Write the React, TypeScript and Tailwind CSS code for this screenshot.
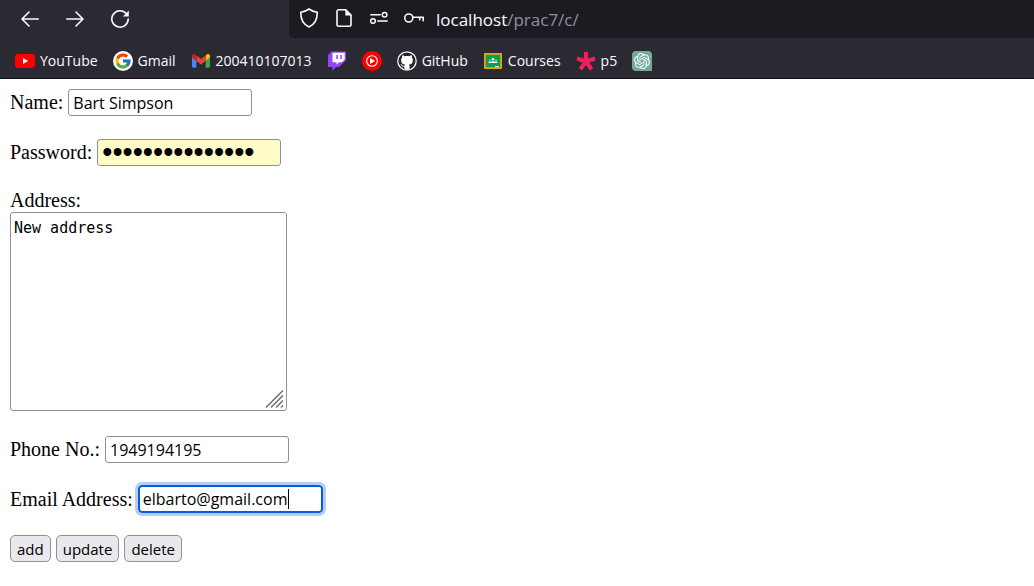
import type { ReactNode } from "react";
import { FcGoogle } from "react-icons/fc";
import { SiOpenai } from "react-icons/si";

function BackIcon() {
  return (
    <svg viewBox="0 0 20 20" className="size-5" fill="none" stroke="#fbfbfe" strokeWidth="1.6" strokeLinecap="round" strokeLinejoin="round">
      <path d="M18.2 10H2M9 3 2 10l7 7" />
    </svg>
  );
}

function ForwardIcon() {
  return (
    <svg viewBox="0 0 20 20" className="size-5" fill="none" stroke="#fbfbfe" strokeWidth="1.6" strokeLinecap="round" strokeLinejoin="round">
      <path d="M1.8 10H18M11 3l7 7-7 7" />
    </svg>
  );
}

function ReloadIcon() {
  return (
    <svg viewBox="0 0 20 20" className="size-5" fill="none" stroke="#fbfbfe" strokeWidth="1.6" strokeLinecap="round">
      <path d="M16.2 4.6A8.2 8.2 0 1 0 18.2 10" />
      <path d="M18.8 1.6v6h-6z" fill="#fbfbfe" stroke="none" />
    </svg>
  );
}

function ShieldIcon() {
  return (
    <svg viewBox="0 0 20 20" className="size-5" fill="none" stroke="#fbfbfe" strokeWidth="1.6" strokeLinejoin="round">
      <path d="M10 1c2.500 1.800 5 2.700 8.300 3.300C18.300 11.500 16 16.500 10 19 4 16.500 1.700 11.500 1.700 4.300 5 3.700 7.500 2.800 10 1z" />
    </svg>
  );
}

function PageIcon() {
  return (
    <svg viewBox="0 0 20 20" className="size-5" fill="none" stroke="#fbfbfe" strokeWidth="1.6" strokeLinejoin="round">
      <path d="M4.500 1.800h7.200L17 7.100v9.600a1.500 1.500 0 0 1-1.500 1.500h-11A1.500 1.500 0 0 1 3 16.700V3.300a1.500 1.500 0 0 1 1.500-1.500z" />
      <path d="M11.400 1.500v5.900h5.900z" fill="#fbfbfe" stroke="none" />
    </svg>
  );
}

function PermissionsIcon() {
  return (
    <svg viewBox="0 0 20 20" className="size-5" fill="none" stroke="#fbfbfe" strokeWidth="1.500" strokeLinecap="round">
      <circle cx="15.600" cy="6.800" r="2.300" />
      <path d="M1.800 6.800h9.400M8.800 13h9.400" />
      <circle cx="4" cy="13" r="2.300" />
    </svg>
  );
}

function KeyIcon() {
  return (
    <svg viewBox="0 0 20 20" className="size-5" fill="none" stroke="#fbfbfe" strokeWidth="1.600" strokeLinecap="round" strokeLinejoin="round">
      <circle cx="4.800" cy="10" r="4" />
      <path d="M9 9.300h10.200v3.400M15.700 9.300v2.400" />
    </svg>
  );
}

function YouTubeIcon() {
  return (
    <svg viewBox="0 0 20 20" className="size-5">
      <rect y="3" width="20" height="14" rx="3.200" fill="#f00" />
      <path d="M8 7v6l5.200-3z" fill="#fff" />
    </svg>
  );
}

function GoogleIcon() {
  return (
    <span className="flex size-5 items-center justify-center rounded-full bg-white">
      <FcGoogle className="size-[18px]" />
    </span>
  );
}

function GmailIcon() {
  return (
    <svg viewBox="0 0 20 20" className="size-5">
      <path d="M1 5v10.300c0 .8.600 1.400 1.400 1.400h3V9.300z" fill="#4285f4" />
      <path d="M19 5v10.300c0 .8-.600 1.400-1.400 1.400h-3V9.300z" fill="#34a853" />
      <path d="M14.600 4.800v5l4.400-3.300V5c0-1.800-2-2.500-3.200-1.500z" fill="#fbbc04" />
      <path d="M5.400 10V4.600L10 8.100l4.600-3.500V10L10 13.400z" fill="#ea4335" />
      <path d="M1 5v1.500L5.400 9.800V4.600L4.200 3.500C2.900 2.500 1 3.300 1 5z" fill="#c5221f" />
    </svg>
  );
}

function TwitchIcon() {
  return (
    <svg viewBox="0 0 20 20" className="size-5">
      <path d="M4.500.500 1 4v12h4.300v3.700L9 16h3l7-7V.500z" fill="#9146ff" />
      <path d="M5.500 1.800h12.200v6.700L15 11.200h-3l-2.500 2.500v-2.500h-4z" fill="#fff" />
      <path d="M9.300 4h1.500v4H9.300zM13.300 4h1.500v4h-1.500z" fill="#9146ff" />
    </svg>
  );
}

function YouTubeMusicIcon() {
  return (
    <svg viewBox="0 0 20 20" className="size-5">
      <circle cx="10" cy="10" r="10" fill="#f00" />
      <circle cx="10" cy="10" r="5.300" fill="none" stroke="#fff" strokeWidth="1.100" />
      <path d="M8 6.900v6.200l5.100-3.100z" fill="#fff" />
    </svg>
  );
}

function GitHubIcon() {
  return (
    <svg viewBox="0 0 20 20" className="size-5">
      <circle cx="10" cy="10" r="9.200" fill="#24292e" stroke="#f5f5f5" strokeWidth="1.300" />
      <path
        d="M7.400 18.600v-2.900c-2 .4-2.600-.8-3-1.500-.2-.4-.6-.6-1-.9 1-.3 1.600.4 2 1 .5.700 1.200.8 2 .5.100-.5.400-.9.700-1.200-2.500-.3-4-1.600-4-4.400 0-1 .3-1.900 1-2.500-.2-.8-.1-1.700.2-2.500.9 0 1.700.4 2.400 1 1.500-.4 3-.4 4.600 0 .7-.6 1.500-1 2.400-1 .3.800.4 1.700.2 2.500.7.600 1 1.500 1 2.500 0 2.800-1.500 4.100-4 4.400.5.500.7 1.100.7 2v3z"
        fill="#fff"
      />
    </svg>
  );
}

function ClassroomIcon() {
  return (
    <svg viewBox="0 0 20 20" className="size-5">
      <rect x="1" y="2" width="18" height="16" rx="1" fill="#e5a80c" />
      <rect x="2.800" y="3.800" width="14.400" height="12.400" fill="#0f9d58" />
      <circle cx="10" cy="8.200" r="1.300" fill="#fff" />
      <circle cx="7" cy="9.200" r=".8" fill="#b7e1cd" />
      <circle cx="13" cy="9.200" r=".8" fill="#b7e1cd" />
      <path d="M5.500 12v-.5c0-.8 1-1.100 2-.8.700-.7 4.300-.7 5 0 1-.3 2 0 2 .8v.5z" fill="#e7f5ee" />
      <path d="M12 15h3.800v1.200H12z" fill="#f1f1f1" />
    </svg>
  );
}

function P5Icon() {
  return (
    <svg viewBox="0 0 20 20" className="size-5" stroke="#ed225d" strokeWidth="4.200">
      <path d="M10 10.500V1M10 10.500 1 7.600M10 10.500l9-2.900M10 10.500l-5.600 7.700M10 10.500l5.600 7.700" />
    </svg>
  );
}

function ChatGptIcon() {
  return (
    <span className="flex size-5 items-center justify-center rounded-l rounded-tr bg-[#74aa9c]">
      <SiOpenai className="size-4 text-white" />
    </span>
  );
}

const bookmarks: { name: string; label?: string; icon: ReactNode }[] = [
  { name: "YouTube", label: "YouTube", icon: <YouTubeIcon /> },
  { name: "Gmail", label: "Gmail", icon: <GoogleIcon /> },
  { name: "200410107013", label: "200410107013", icon: <GmailIcon /> },
  { name: "Twitch", icon: <TwitchIcon /> },
  { name: "YouTube Music", icon: <YouTubeMusicIcon /> },
  { name: "GitHub", label: "GitHub", icon: <GitHubIcon /> },
  { name: "Courses", label: "Courses", icon: <ClassroomIcon /> },
  { name: "p5", label: "p5", icon: <P5Icon /> },
  { name: "ChatGPT", icon: <ChatGptIcon /> },
];

function BrowserBar() {
  return (
    <header className="border-b border-[#0c0c0d] bg-[#2b2a33] font-['Open_Sans',sans-serif] text-[#fbfbfe]">
      <div className="flex h-11 items-start">
        <nav aria-label="History" className="flex h-[38px] w-[289px] shrink-0 items-center gap-[25px] pl-5">
          <button type="button" aria-label="Back"><BackIcon /></button>
          <button type="button" aria-label="Forward"><ForwardIcon /></button>
          <button type="button" aria-label="Reload"><ReloadIcon /></button>
        </nav>
        <div className="flex h-[38px] grow items-center gap-3 rounded-bl bg-[#1c1b22] pb-0.5 pl-2.5">
          <div className="flex items-center gap-[15px]">
            <ShieldIcon />
            <PageIcon />
            <PermissionsIcon />
            <KeyIcon />
          </div>
          <p className="pt-1 text-[17px] leading-6 text-[#8f8f9d]">
            <span className="text-[#fbfbfe]">localhost</span>/prac7/c/
          </p>
        </div>
      </div>
      <nav aria-label="Bookmarks" className="flex h-[34px] items-center gap-[15px] pl-[15px] text-sm">
        {bookmarks.map((item) => (
          <a key={item.name} href="#" aria-label={item.name} className="flex items-center gap-[5px]">
            {item.icon}
            {item.label && <span>{item.label}</span>}
          </a>
        ))}
      </nav>
    </header>
  );
}

const field = "h-[27px] w-[184px] rounded-[3px] border border-[#8f8f9d] px-1 text-black outline-none";
const textFont = "font-['Open_Sans',sans-serif] text-base";
const action =
  "h-[27px] rounded-[5px] border border-[#8f8f9d] bg-[#e9e9ed] px-1.5 font-['Open_Sans',sans-serif] text-[15px] leading-6";

export default function App() {
  return (
    <div className="min-h-screen bg-white">
      <BrowserBar />
      <form
        onSubmit={(event) => event.preventDefault()}
        className="flex flex-col gap-[23px] px-2.5 pt-2.5 font-['Liberation_Serif',serif] text-xl leading-[23px] text-black"
      >
        <div className="flex items-center gap-[5px]">
          <label htmlFor="name">Name:</label>
          <input id="name" type="text" defaultValue="Bart Simpson" className={`${field} ${textFont}`} />
        </div>
        <div className="flex items-center gap-[5px]">
          <label htmlFor="password">Password:</label>
          <input
            id="password"
            type="password"
            defaultValue="elbartosimpson1"
            autoComplete="off"
            className={`${field} bg-[#fffcc8] font-['Liberation_Sans',sans-serif] text-[29px]`}
          />
        </div>
        <div className="flex flex-col items-start pb-0.5">
          <label htmlFor="address">Address:</label>
          <div className="relative">
            <textarea
              id="address"
              defaultValue="New address"
              className="block h-[199px] w-[277px] resize-none rounded-[3px] border border-[#8f8f9d] px-[3px] py-1.5 font-['DejaVu_Sans_Mono',monospace] text-[15px] leading-[18px] outline-none"
            />
            <svg viewBox="0 0 20 20" className="pointer-events-none absolute bottom-0.5 right-0.5 size-5" stroke="#74746c" strokeWidth="1.600">
              <path d="M1 18.500 18 1.500M6 18.500l12-12M11 18.500l7-7M16 18.500l2-2" />
            </svg>
          </div>
        </div>
        <div className="flex items-center gap-[5px]">
          <label htmlFor="phone">Phone No.:</label>
          <input id="phone" type="text" defaultValue="1949194195" className={`${field} ${textFont}`} />
        </div>
        <div className="flex h-[26px] items-center gap-[5px]">
          <label htmlFor="email">Email Address:</label>
          <div className="relative">
            <input
              id="email"
              type="text"
              defaultValue="elbarto@gmail.com"
              className={`block h-7 w-[185px] rounded-[4px] border-2 border-[#0060df] px-[3px] text-black outline-3 outline-[#b8cdf0] ${textFont}`}
            />
            <span className="absolute left-[150px] top-1 h-5 w-px bg-black" />
          </div>
        </div>
        <div className="flex gap-[5px]">
          <button type="submit" className={action}>add</button>
          <button type="submit" className={action}>update</button>
          <button type="submit" className={action}>delete</button>
        </div>
      </form>
    </div>
  );
}
